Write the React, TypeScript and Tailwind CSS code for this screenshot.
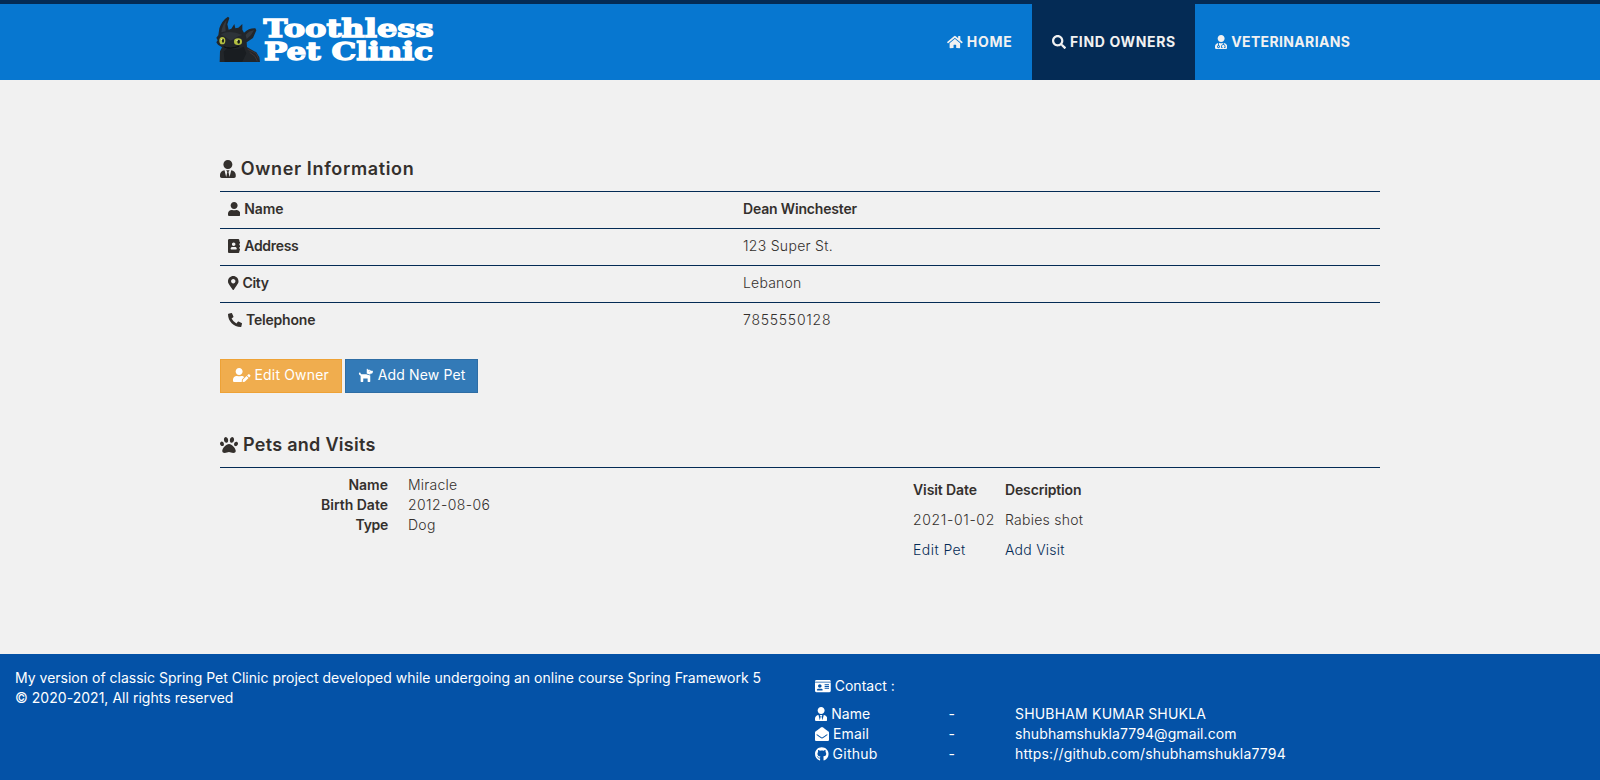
import type { ReactNode } from 'react';
import type { IconType } from 'react-icons';
import {
  FaHome, FaSearch, FaUserMd, FaUserTie, FaUser, FaAddressBook, FaMapMarkerAlt, FaPhoneAlt,
  FaUserEdit, FaDog, FaPaw, FaIdCard, FaEnvelopeOpen, FaGithub,
} from 'react-icons/fa';

function Logo() {
  return (
    <svg width="225" height="60" viewBox="0 0 225 60" overflow="visible" role="img" aria-label="Toothless Pet Clinic">
      <g transform="translate(-1 -1) scale(0.33333)">
        <path
          d="M35 156 L36 124 L42 112 L30 104 L25 97 L29 91 L25 83 L31 76 L34 55 Q42 31 60 20 L64 24 L58 43 L62 59 L70 56 L79 42 L82 55 L91 53 L103 42 L103 59 L108 68 Q123 54 142 55 L145 61 L135 84 L116 97 L117 111 L127 117 L145 127 L154 142 L156 156 Z"
          fill="#22262a"
        />
        <path d="M40 67 Q43 43 56 30 L52 48 L53 64 Z M113 75 Q124 62 138 61 L129 75 L116 87 Z" fill="#343a40" />
        <path d="M38 73 Q65 58 103 75 L91 79 L68 92 L51 80 Z" fill="#2d3339" />
        <path d="M61 112 Q81 124 107 110 L115 130 L103 155 L50 156 L47 125 Z" fill="#191d21" />
        <path d="M119 118 L144 130 L151 145 M125 127 L141 139 L148 154" fill="none" stroke="#4b3a39" strokeWidth="2" />
        <path d="M47 110 Q64 119 93 109" fill="none" stroke="#090c0f" strokeWidth="3" />
        <ellipse cx="43" cy="92" rx="9" ry="11" fill="#b4c040" />
        <ellipse cx="90" cy="95" rx="12" ry="10" fill="#b4c040" />
        <ellipse cx="45" cy="92" rx="3" ry="6" fill="#14191a" />
        <ellipse cx="92" cy="95" rx="4" ry="6" fill="#14191a" />
        <circle cx="41" cy="88" r="2" fill="#eff3c0" />
        <circle cx="87" cy="91" r="2" fill="#eff3c0" />
      </g>
      <g
        className="font-['DejaVu_Serif',serif] font-bold"
        fill="#ffffff"
        stroke="#ffffff"
        strokeWidth="1.4"
        fontSize="25"
      >
        <text x="54.5" y="25.5" textLength="170" lengthAdjust="spacingAndGlyphs">Toothless</text>
        <text x="55" y="48.5" textLength="169" lengthAdjust="spacingAndGlyphs">Pet Clinic</text>
      </g>
    </svg>
  );
}

function Label({ icon: Icon, size, children }: { icon: IconType; size: string; children: ReactNode }) {
  return (
    <span className="flex items-center gap-1 whitespace-nowrap">
      <Icon className={`shrink-0 ${size}`} preserveAspectRatio="xMidYMid meet" />
      {children}
    </span>
  );
}

const owner = [
  { icon: FaUser, size: 'w-[12.25px] h-[14px]', label: 'Name', lt: 'tracking-[-0.05px]', value: 'Dean Winchester', vt: 'font-semibold tracking-[-0.17px]' },
  { icon: FaAddressBook, size: 'w-[12.25px] h-[14px]', label: 'Address', lt: 'tracking-[-0.3px]', value: '123 Super St.', vt: 'font-light tracking-[0.3px]' },
  { icon: FaMapMarkerAlt, size: 'w-[10.5px] h-[14px]', label: 'City', lt: 'tracking-[-0.35px]', value: 'Lebanon', vt: 'font-light tracking-[0.2px]' },
  { icon: FaPhoneAlt, size: 'w-[14px] h-[14px]', label: 'Telephone', lt: 'tracking-[-0.2px]', value: '7855550128', vt: 'font-light tracking-[0.75px]' },
];

const contacts = [
  { icon: FaUserTie, size: 'w-[12.25px] h-[14px]', label: 'Name', lt: '', value: 'SHUBHAM KUMAR SHUKLA', vt: 'tracking-[0.18px]' },
  { icon: FaEnvelopeOpen, size: 'w-[14px] h-[14px]', label: 'Email', lt: 'tracking-[0.15px]', value: 'shubhamshukla7794@gmail.com', vt: 'tracking-[0.09px]' },
  { icon: FaGithub, size: 'w-[13.6px] h-[14px]', label: 'Github', lt: 'tracking-[0.25px]', value: 'https://github.com/shubhamshukla7794', vt: 'tracking-[0.19px]' },
];

export default function App() {
  return (
    <div className="flex h-[780px] flex-col bg-[#f1f1f1] font-['Inter',sans-serif] text-[14px] leading-5 text-[#34302d]">
      <header className="h-20 border-t-4 border-[#042b55] bg-[#0777d0]">
        <div className="mx-auto flex h-full w-[1170px] justify-between">
          <a className="-ml-1.5 pt-[7px]">
            <Logo />
          </a>
          <nav className="flex font-bold text-[#f1f1f1]">
            <a className="flex w-[105px] items-center pl-5 tracking-[0.7px]">
              <Label icon={FaHome} size="w-[15.75px] h-[14px]">HOME</Label>
            </a>
            <a className="flex w-[163px] items-center bg-[#042b55] pl-5 tracking-[0.65px]">
              <Label icon={FaSearch} size="w-[14px] h-[14px]">FIND OWNERS</Label>
            </a>
            <a className="flex w-[190px] items-center pl-5 tracking-[0.35px]">
              <Label icon={FaUserMd} size="w-[12.25px] h-[14px]">VETERINARIANS</Label>
            </a>
          </nav>
        </div>
      </header>

      <main className="mx-auto w-[1160px] flex-1 pt-[79px]">
        <h2 className="flex h-5 items-center text-[18px] font-semibold tracking-[0.64px]">
          <FaUserTie className="mr-[5px] h-[18px] w-[15.75px]" />
          Owner Information
        </h2>
        <div className="mt-3">
          {owner.map((row) => (
            <div key={row.label} className="flex border-t border-[#042b55] pt-[7px] pb-[9px]">
              <div className={`w-[515px] pl-2 font-semibold ${row.lt}`}>
                <Label icon={row.icon} size={row.size}>{row.label}</Label>
              </div>
              <div className={`pl-2 ${row.vt}`}>{row.value}</div>
            </div>
          ))}
        </div>

        <div className="mt-5 flex gap-[3px] text-white">
          <button className="flex h-[34px] w-[122px] items-center border border-[#eea236] bg-[#f0ad4e] pb-0.5 pl-3 tracking-[0.17px]">
            <Label icon={FaUserEdit} size="w-[17.5px] h-[14px]">Edit Owner</Label>
          </button>
          <button className="flex h-[34px] w-[133px] items-center border border-[#2e6da4] bg-[#337ab7] pb-0.5 pl-3 tracking-[0.15px]">
            <Label icon={FaDog} size="w-[15.75px] h-[14px]">Add New Pet</Label>
          </button>
        </div>

        <h2 className="mt-[42px] flex h-5 items-center text-[18px] font-semibold tracking-[0.28px]">
          <FaPaw className="mr-[5px] h-[18px] w-[18px]" />
          Pets and Visits
        </h2>
        <div className="mt-3 flex border-t border-[#042b55] pt-[7px]">
          <dl className="grid w-[688px] grid-cols-[168px_1fr] content-start gap-x-5">
            <dt className="text-right font-semibold">Name</dt>
            <dd className="font-light tracking-[0.2px]">Miracle</dd>
            <dt className="text-right font-semibold">Birth Date</dt>
            <dd className="font-light tracking-[0.4px]">2012-08-06</dd>
            <dt className="text-right font-semibold tracking-[-0.3px]">Type</dt>
            <dd className="font-light tracking-[0.3px]">Dog</dd>
          </dl>
          <div className="grid grid-cols-[92px_1fr] gap-y-[10px] pt-[5px] pl-[5px]">
            <span className="font-semibold tracking-[-0.1px]">Visit Date</span>
            <span className="font-semibold tracking-[-0.15px]">Description</span>
            <span className="font-light tracking-[0.65px]">2021-01-02</span>
            <span className="font-light tracking-[0.25px]">Rabies shot</span>
            <a className="font-light tracking-[0.45px] text-[#042b55]">Edit Pet</a>
            <a className="font-light tracking-[0.25px] text-[#042b55]">Add Visit</a>
          </div>
        </div>
      </main>

      <footer className="flex h-[126px] bg-[#0452a7] text-white">
        <div className="w-[815px] pt-[14px] pl-[15px]">
          <p className="tracking-[0.005px]">My version of classic Spring Pet Clinic project developed while undergoing an online course Spring Framework 5</p>
          <p className="tracking-[0.03px]">© 2020-2021, All rights reserved</p>
        </div>
        <div className="pt-[22px]">
          <Label icon={FaIdCard} size="w-[15.75px] h-[14px]">Contact :</Label>
          <div className="mt-2">
            {contacts.map((row) => (
              <div key={row.label} className="flex">
                <div className={`w-[133.5px] ${row.lt}`}>
                  <Label icon={row.icon} size={row.size}>{row.label}</Label>
                </div>
                <span className="w-[66.5px]">-</span>
                <span className={row.vt}>{row.value}</span>
              </div>
            ))}
          </div>
        </div>
      </footer>
    </div>
  );
}
